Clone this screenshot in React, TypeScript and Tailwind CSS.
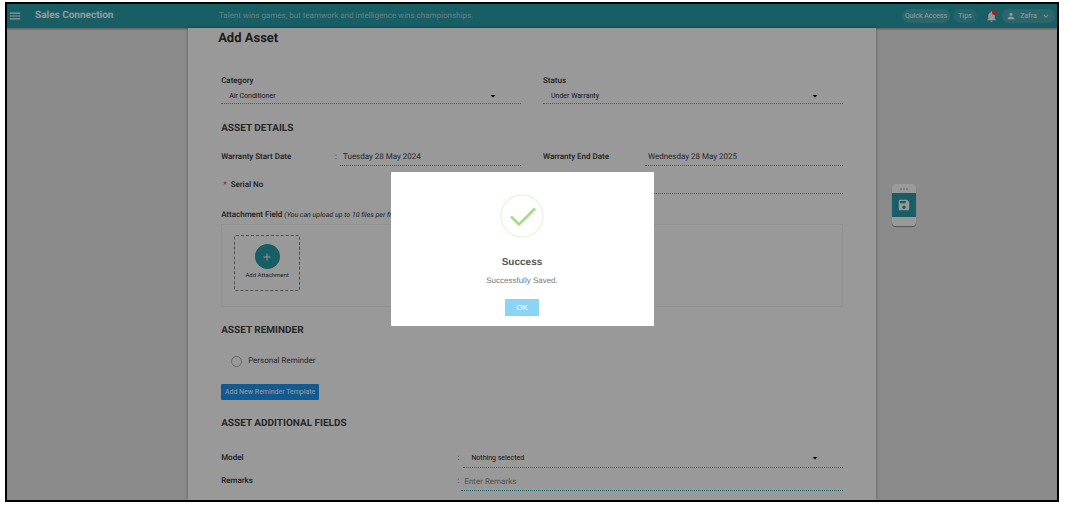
import { useState } from 'react';
import type { ReactNode } from 'react';
import { MdMenu, MdNotifications, MdPerson, MdExpandMore, MdSave, MdAdd, MdArrowDropDown } from 'react-icons/md';

const labelClass = "text-[8px] leading-3 font-medium text-[#333333]";
const lineClass = "border-b border-dotted border-[#3fa9b3]";
const inputClass = `min-w-0 flex-1 text-[8px] text-[#444444] placeholder-[#888888] focus:outline-none [text-rendering:inherit] ${lineClass}`;

function Heading({ children, className }: { children: ReactNode; className: string }) {
  return <h2 className={`text-[10px] leading-4 font-bold text-[#444444] ${className}`}>{children}</h2>;
}

function SelectField({ id, options, className }: { id: string; options: string[]; className: string }) {
  return (
    <div className={`relative ${lineClass} ${className}`}>
      <select
        id={id}
        className="block w-full h-3 appearance-none bg-transparent pl-2 text-[7px] leading-3 text-[#222222] focus:outline-none"
      >
        {options.map((o) => (
          <option key={o}>{o}</option>
        ))}
      </select>
      <MdArrowDropDown className="pointer-events-none absolute right-[22px] top-0 size-3 text-black" />
    </div>
  );
}

function Header() {
  return (
    <header className="flex h-6 shrink-0 items-center bg-[#289da8] text-white shadow-[0_1px_2px_rgba(0,0,0,0.4)]">
      <div className="flex w-[212px] shrink-0 items-center gap-3">
        <button aria-label="Menu" className="flex size-4 items-center justify-center">
          <MdMenu className="size-[14px]" />
        </button>
        <span className="text-[10px] leading-4 font-bold">Sales Connection</span>
      </div>
      <p className="flex-1 text-[8px] leading-3 text-white/60">
        Talent wins games, but teamwork and intelligence wins championships.
      </p>
      <div className="flex items-center pr-0.5 text-[7px] leading-3">
        <button className="h-[14px] w-12 rounded-full bg-white/15 text-center">Quick Access</button>
        <button className="ml-[3px] h-[14px] w-6 rounded-full bg-white/10">Tips</button>
        <button aria-label="Notifications" className="relative ml-1.5 flex size-4 items-center justify-center">
          <MdNotifications className="size-[13px]" />
          <span className="absolute right-0.5 top-0.5 size-[5px] rounded-full bg-[#f44336]" />
        </button>
        <button className="ml-[3px] flex h-[14px] w-[53px] items-center justify-between rounded-full bg-white/15 px-1">
          <MdPerson className="size-[10px]" />
          Zafra
          <MdExpandMore className="size-[10px]" />
        </button>
      </div>
    </header>
  );
}

function AssetForm() {
  return (
    <form className="px-[33px] pt-[3px]" onSubmit={(e) => e.preventDefault()}>
      <h1 className="-ml-[3px] text-[13px] leading-4 font-bold text-[#333333]">Add Asset</h1>

      <div className="mt-7 grid grid-cols-2 gap-[22px]">
        <div>
          <label htmlFor="category" className={`block ${labelClass}`}>Category</label>
          <SelectField id="category" options={["Air Conditioner"]} className="mt-[3px] h-[14px]" />
        </div>
        <div>
          <label htmlFor="status" className={`block ${labelClass}`}>Status</label>
          <SelectField id="status" options={["Under Warranty"]} className="mt-[3px] h-[14px]" />
        </div>
      </div>

      <Heading className="mt-[17px]">ASSET DETAILS</Heading>

      <div className="mt-[11px] grid grid-cols-2 gap-[22px]">
        <div className="flex">
          <label htmlFor="start" className={`w-[38%] pt-[3px] ${labelClass}`}>Warranty Start Date</label>
          <span className="w-[5px] pt-[3px] text-[8px] leading-3 text-[#555555]">:</span>
          <input id="start" defaultValue="Tuesday 28 May 2024" className={`h-[18px] pl-[3px] ${inputClass}`} />
        </div>
        <div className="flex">
          <label htmlFor="end" className={`w-[34%] pt-[3px] ${labelClass}`}>Warranty End Date</label>
          <input id="end" defaultValue="Wednesday 28 May 2025" className={`h-[18px] pl-[3px] ${inputClass}`} />
        </div>
      </div>

      <div className="mt-[10px] flex">
        <label htmlFor="serial" className={`w-[38%] pt-[3px] ${labelClass}`}>
          <span className="mx-0.5 text-[#e53935]">*</span> Serial No
        </label>
        <input id="serial" className={`h-[18px] ${inputClass}`} />
      </div>

      <p className={`mt-[15px] ${labelClass}`}>
        Attachment Field{' '}
        <span className="text-[7px] font-normal italic">(You can upload up to 10 files per field)</span>
      </p>
      <div className="mt-[3px] h-[83px] border border-[#f0f0f0] pl-3 pt-[10px]">
        <button
          type="button"
          className="flex h-14 w-[66px] flex-col items-center rounded-xs border border-dashed border-[#888888] pt-2 text-[6px] leading-3 text-[#333333]"
        >
          <span className="flex size-[25px] items-center justify-center rounded-full bg-[#289da8] text-white">
            <MdAdd className="size-3" />
          </span>
          Add Attachment
        </button>
      </div>

      <Heading className="mt-4">ASSET REMINDER</Heading>
      <label className="mt-4 flex items-center gap-[6px] pl-[10px] text-[8px] leading-3 text-[#444444]">
        <input
          type="radio"
          name="reminder"
          className="size-[11px] appearance-none rounded-full border border-[#aaaaaa] checked:bg-[#289da8]"
        />
        Personal Reminder
      </label>
      <button
        type="button"
        className="mt-[17px] block h-4 w-[98px] rounded-[1px] bg-[#2196f3] text-[7px] text-white"
      >
        Add New Reminder Template
      </button>

      <Heading className="mt-4">ASSET ADDITIONAL FIELDS</Heading>
      <div className="mt-5 flex">
        <label htmlFor="model" className={`w-[38%] ${labelClass}`}>Model</label>
        <span className="w-[6px] text-[8px] leading-3 text-[#555555]">:</span>
        <SelectField id="model" options={["Nothing selected"]} className="h-4 flex-1" />
      </div>
      <div className="mt-[7px] flex">
        <label htmlFor="remarks" className={`w-[38%] ${labelClass}`}>Remarks</label>
        <span className="w-1 text-[8px] leading-3 text-[#555555]">:</span>
        <input id="remarks" placeholder="Enter Remarks" className={`h-4 pb-[3px] pl-[3px] ${inputClass}`} />
      </div>
    </form>
  );
}

export default function App() {
  const [open, setOpen] = useState(true);

  return (
    <div className="h-screen bg-white pb-[7px] pl-[5px] pr-[6px] pt-[2px] font-['Roboto',sans-serif] [text-rendering:geometricPrecision]">
      <div className="relative flex h-full flex-col overflow-hidden border-2 border-black bg-[#e8e8e8]">
        <Header />

        <div className="flex min-h-0 flex-1">
          <div className="flex-1" />
          <main className="w-[65.5%] overflow-hidden bg-white shadow-[0_0_3px_rgba(0,0,0,0.4)]">
            <AssetForm />
          </main>
          <aside className="flex-1 pt-[156px]">
            <div className="ml-4 w-6 overflow-hidden rounded-[4px] bg-white shadow-[0_1px_1px_rgba(0,0,0,0.4)]">
              <div className="flex h-[9px] items-center justify-center gap-px">
                <span className="size-0.5 rounded-full bg-[#cccccc]" />
                <span className="size-0.5 rounded-full bg-[#cccccc]" />
                <span className="size-0.5 rounded-full bg-[#cccccc]" />
              </div>
              <button aria-label="Save" className="flex h-6 w-full items-center justify-center bg-[#289da8] text-white">
                <MdSave className="size-[14px]" />
              </button>
              <div className="h-[9px]" />
            </div>
          </aside>
        </div>

        {open && (
          <div className="absolute inset-0 flex items-center justify-center bg-black/40 pb-[6px] pr-5">
            <div
              role="dialog"
              aria-labelledby="dialog-title"
              className="flex h-[154px] w-[263px] flex-col items-center bg-white pt-[22px] font-['Liberation_Sans',sans-serif]"
            >
              <svg viewBox="0 0 44 44" className="size-11" fill="none">
                <circle cx="22" cy="22" r="21" stroke="#edf8e7" strokeWidth="2" />
                <path d="M11 22.5L19 30.5L35 14.5" stroke="#a5dc86" strokeWidth="2.6" />
              </svg>
              <h2 id="dialog-title" className="mt-[17px] text-[10px] leading-4 font-bold text-[#575757]">Success</h2>
              <p className="mt-1 text-[8px] leading-3 text-[#797979]">Successfully Saved.</p>
              <button
                onClick={() => setOpen(false)}
                className="mt-3 h-[17px] w-[34px] bg-[#8cd4f5] text-[8px] text-white"
              >
                OK
              </button>
            </div>
          </div>
        )}
      </div>
    </div>
  );
}
